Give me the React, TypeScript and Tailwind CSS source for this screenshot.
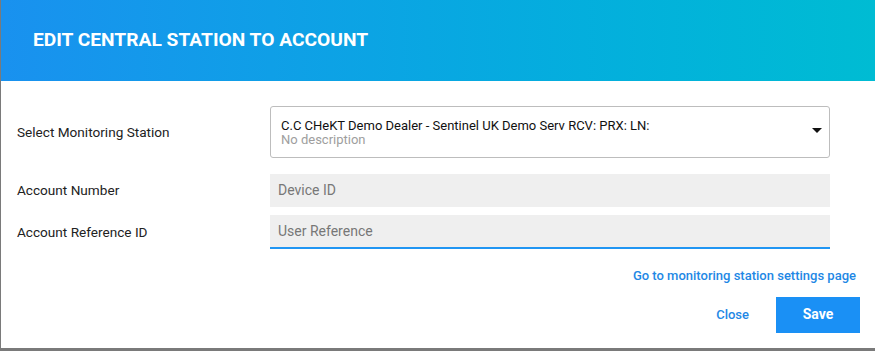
import React from 'react';

const App: React.FC = () => {
  return (
    <div className="w-[875px] h-[351px] bg-[#7a7a7a] pl-px overflow-hidden" style={{ fontFamily: 'Roboto, "Liberation Sans", sans-serif' }}>
      <div className="w-[874px] h-[348px] bg-white flex flex-col">
        {/* Header */}
        <div className="h-[81px] flex items-center pl-[32px] bg-gradient-to-r from-[#1991ef] to-[#00bcd3]">
          <h2 className="text-white text-[19.2px] font-bold">EDIT CENTRAL STATION TO ACCOUNT</h2>
        </div>

        {/* Body */}
        <div className="flex flex-col pl-[16px] pr-[45px] pt-[25px]">
          <div className="flex items-center">
            <label className="w-[253px] text-[13.6px] text-[#222]">Select Monitoring Station</label>
            <div className="relative flex-1 h-[52px] border border-[#bdbdbd] rounded-[3px] px-[10px] pt-[12px]">
              <div className="text-[13px] leading-[14px] text-[#111]">C.C CHeKT Demo Dealer - Sentinel UK Demo Serv RCV: PRX: LN:</div>
              <div className="text-[13px] leading-[13px] text-[#9e9e9e]">No description</div>
              <div className="absolute right-[7px] top-[21px] w-0 h-0 border-l-[5px] border-r-[5px] border-t-[5px] border-l-transparent border-r-transparent border-t-[#111]" />
            </div>
          </div>

          <div className="flex items-center mt-[16px]">
            <label className="w-[253px] text-[13.6px] text-[#222]">Account Number</label>
            <div className="flex-1 h-[33px] bg-[#efefef] flex items-center px-[8px] text-[14px] text-[#777]">Device ID</div>
          </div>

          <div className="flex items-center mt-[8px]">
            <label className="w-[253px] text-[13.6px] text-[#222]">Account Reference ID</label>
            <div className="flex-1 flex flex-col">
              <div className="h-[32px] bg-[#efefef] flex items-center px-[8px] text-[14px] text-[#777]">User Reference</div>
              <div className="h-[2px] bg-[#2196f3]" />
            </div>
          </div>

          <div className="flex justify-end mt-[17px] -mr-[26px]">
            <a className="text-[13px] font-medium text-[#1e88e5]">Go to monitoring station settings page</a>
          </div>

          <div className="flex justify-end items-center mt-[11px] -mr-[30px] gap-[26px]">
            <button className="text-[13px] font-medium text-[#1e88e5] mr-px">Close</button>
            <button className="w-[84px] h-[36px] bg-[#1a90f5] text-white text-[14px] font-bold">Save</button>
          </div>
        </div>
      </div>
    </div>
  );
};

export default App;
